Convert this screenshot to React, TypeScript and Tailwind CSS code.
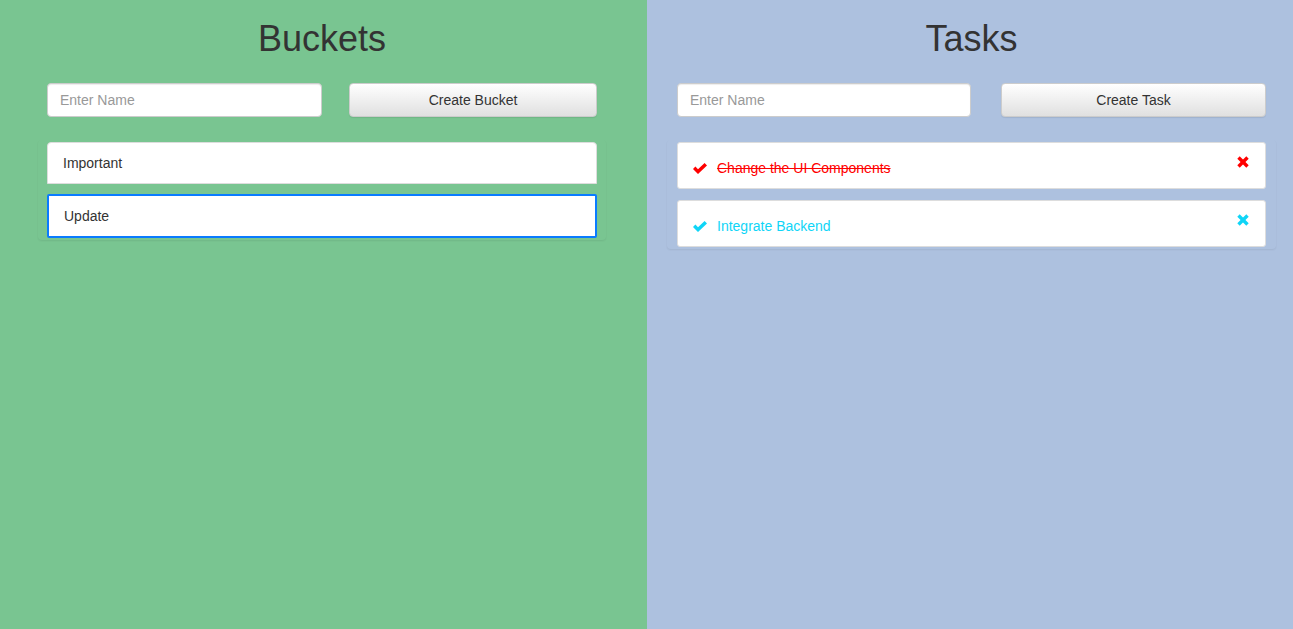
import { useState } from 'react';

type Task = { id: number; name: string; done: boolean };

const buckets = ['Important', 'Update'];

function CheckIcon({ className }: { className?: string }) {
    return (
        <svg viewBox="0 0 14 11" className={className} fill="currentColor">
            <polygon points="0,6 2.4,3.6 5,6.2 11.6,0 14,2.4 5,11" />
        </svg>
    );
}

function CrossIcon({ className }: { className?: string }) {
    return (
        <svg viewBox="0 0 12 12" className={className} stroke="currentColor" strokeWidth="3.4" fill="none">
            <line x1="1.5" y1="1.5" x2="10.5" y2="10.5" />
            <line x1="10.5" y1="1.5" x2="1.5" y2="10.5" />
        </svg>
    );
}

export default function App() {
    const [selected] = useState(1);
    const [tasks] = useState<Task[]>([
        { id: 1, name: 'Change the UI Components', done: true },
        { id: 2, name: 'Integrate Backend', done: false },
    ]);

    const buttonCls =
        'h-[34px] rounded-[4px] border border-[#ccc] bg-gradient-to-b from-white to-[#e0e0e0] text-[14px] text-[#333] shadow-[0_1px_1px_rgba(0,0,0,0.08)]';
    const inputCls =
        'h-[34px] rounded-[4px] border border-[#ccc] bg-white px-[12px] text-[14px] text-[#555] placeholder:text-[#999] outline-none shadow-[inset_0_1px_1px_rgba(0,0,0,0.075)]';

    return (
        <div className="flex min-h-screen font-['Liberation_Sans',Arial,sans-serif] text-[14px] text-[#333]">
            {/* Buckets */}
            <div className="w-[647px] shrink-0 bg-[#79c591] pl-[47px] pr-[50px]">
                <h1 className="mt-[19px] h-[40px] text-center text-[36px] leading-[40px] text-[#333]">Buckets</h1>
                <div className="mt-[24px] flex">
                    <input className={`${inputCls} w-[275px]`} placeholder="Enter Name" />
                    <button className={`${buttonCls} ml-auto w-[248px]`}>Create Bucket</button>
                </div>
                <div className="-mx-[9px] mt-[23px] rounded-[4px] px-[9px] py-[2px] shadow-[0_1px_2px_rgba(0,0,0,0.07)]">
                    {buckets.map((b, i) => (
                        <div
                            key={b}
                            className={`flex items-center bg-white px-[15px] ${i > 0 ? 'mt-[10px]' : ''} ${
                                i === selected
                                    ? 'h-[44px] rounded-[2px] border-2 border-[#0a7bff]'
                                    : 'h-[42px] rounded-t-[4px] border border-[#ddd]'
                            }`}
                        >
                            {b}
                        </div>
                    ))}
                </div>
            </div>

            {/* Tasks */}
            <div className="flex-1 bg-[#adc1df] pl-[30px] pr-[27px]">
                <h1 className="mt-[19px] h-[40px] text-center text-[36px] leading-[40px] text-[#333]">Tasks</h1>
                <div className="mt-[24px] flex">
                    <input className={`${inputCls} w-[294px]`} placeholder="Enter Name" />
                    <button className={`${buttonCls} ml-auto w-[265px]`}>Create Task</button>
                </div>
                <div className="-mx-[10px] mt-[23px] rounded-[4px] px-[10px] py-[2px] shadow-[0_1px_2px_rgba(0,0,0,0.07)]">
                    {tasks.map((t, i) => {
                        const color = t.done ? 'text-[#ff0000]' : 'text-[#0fd5f7]';
                        return (
                            <div
                                key={t.id}
                                className={`flex h-[47px] items-start rounded-[3px] border border-[#ddd] bg-white pl-[15px] pr-[16px] pt-[15px] ${
                                    i > 0 ? 'mt-[11px]' : ''
                                }`}
                            >
                                <div className={`flex h-[20px] items-center ${color}`}>
                                    <CheckIcon className="h-[11px] w-[14px]" />
                                    <span className={`ml-[10px] leading-[20px] ${t.done ? 'line-through' : ''}`}>{t.name}</span>
                                </div>
                                <CrossIcon className={`ml-auto mt-[-2px] h-[12px] w-[12px] ${color}`} />
                            </div>
                        );
                    })}
                </div>
            </div>
        </div>
    );
}
